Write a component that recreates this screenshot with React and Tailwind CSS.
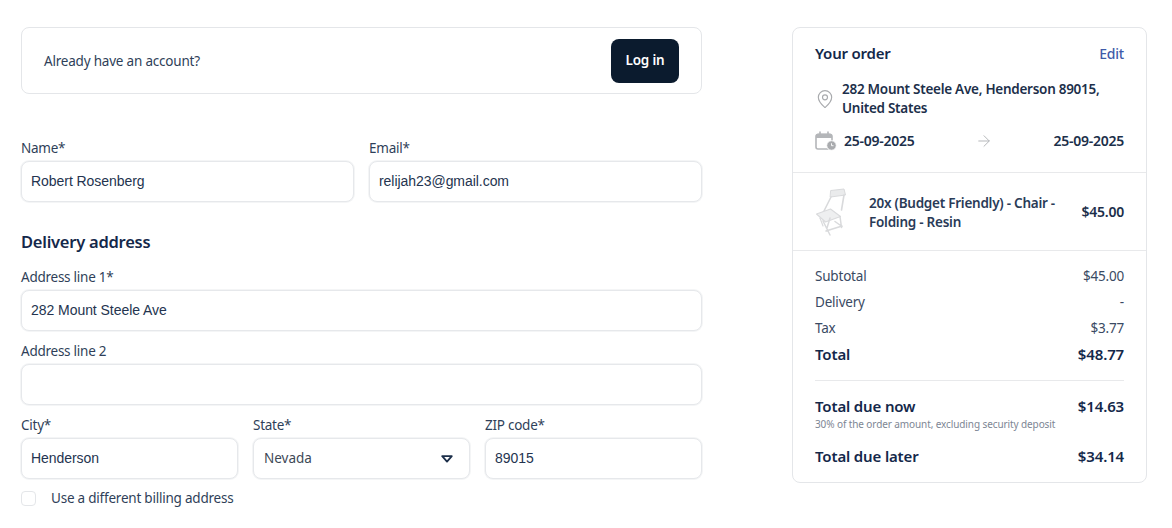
import { ArrowRight, MapPin } from 'lucide-react'

const bodyFont = { fontFamily: '"Noto Sans", sans-serif' }

function Field({ label, value, className = '' }) {
  return (
    <div className={`flex flex-col ${className}`}>
      <label className="text-[13.5px] leading-[19px] h-[20px] mb-[2px] tracking-[-0.25px] text-[#2f3f59]">{label}</label>
      <div className="h-[41px] rounded-lg border border-[#e6e8eb] shadow-[0_0_0_1px_#f4f5f6] bg-white px-[9px] flex items-center font-['Liberation_Sans',sans-serif] text-[14px] tracking-[-0.05px] text-[#24344f]">
        {value}
      </div>
    </div>
  )
}

function SummaryRow({ label, value }) {
  return (
    <div className="flex justify-between items-center h-[26px] text-[13.5px] tracking-[-0.2px] text-[#3a4a63]">
      <span>{label}</span>
      <span>{value}</span>
    </div>
  )
}

function CalendarClock() {
  return (
    <svg width="22" height="20" viewBox="0 0 22 20" fill="none" className="shrink-0">
      <rect x="1" y="3.5" width="16" height="14.5" rx="2" stroke="#b4b6b9" strokeWidth="1.6" />
      <path d="M1 4.5a2 2 0 0 1 2-2h12a2 2 0 0 1 2 2V7H1z" fill="#b4b6b9" />
      <path d="M5 1v3M13 1v3" stroke="#b4b6b9" strokeWidth="1.6" strokeLinecap="round" />
      <circle cx="16.5" cy="14.5" r="4.8" fill="#a9abae" stroke="white" strokeWidth="1" />
      <path d="M16.5 12.3v2.4h2" stroke="white" strokeWidth="0.9" />
    </svg>
  )
}

function Chair() {
  return (
    <svg width="32" height="48" viewBox="0 0 32 48" fill="none" className="shrink-0">
      <g stroke="#d9dadc" strokeLinecap="round" strokeLinejoin="round">
        <path d="M16 2.5l13-1.5 1.5 6-15 2z" fill="#eaebec" strokeWidth="1" />
        <path d="M16 9L7 27M29 7l-1.5 9-1 6" strokeWidth="1.6" />
        <path d="M1.5 26l14-5 10 7.5-15 5.5z" fill="#eeeff0" strokeWidth="1.1" />
        <path d="M8 33l7 14M15 30l-3 10M25 28.5l1.5 11M20 33.5l7 5M11 43l16-5" strokeWidth="1.5" />
        <path d="M5 30l3 8" strokeWidth="1.2" />
      </g>
    </svg>
  )
}

export default function App() {
  return (
    <div style={bodyFont} className="w-[1172px] h-[528px] overflow-hidden bg-white pt-[27px] pl-[21px] flex items-start gap-[90px]">
      <div className="w-[681px] shrink-0">
        <div className="h-[67px] rounded-lg border border-[#e4e6e9] flex items-center justify-between pl-[22px] pr-[22px]">
          <span className="text-[13.5px] tracking-[-0.2px] text-[#2f3f59] translate-y-px">Already have an account?</span>
          <button className="h-[44px] w-[68px] rounded-lg bg-[#0b1b2e] text-white text-[13.5px] font-semibold tracking-[-0.2px]">Log in</button>
        </div>

        <div className="mt-[45px] grid grid-cols-2 gap-[15px]">
          <Field label="Name*" value="Robert Rosenberg" />
          <Field label="Email*" value="relijah23@gmail.com" />
        </div>

        <h2 className="mt-[27px] text-[16.5px] leading-[26px] font-semibold tracking-[-0.25px] text-[#14284a]">Delivery address</h2>

        <Field label="Address line 1*" value="282 Mount Steele Ave" className="mt-[13px]" />
        <Field label="Address line 2" value="" className="mt-[11px]" />

        <div className="mt-[11px] grid grid-cols-3 gap-[15px]">
          <Field label="City*" value="Henderson" />
          <div className="flex flex-col">
            <label className="text-[13.5px] leading-[19px] h-[20px] mb-[2px] tracking-[-0.25px] text-[#2f3f59]">State*</label>
            <div className="h-[41px] rounded-lg border border-[#e6e8eb] shadow-[0_0_0_1px_#f4f5f6] bg-white pl-[10px] pr-[16px] flex items-center justify-between text-[13.5px] text-[#3d4856]">
              <span>Nevada</span>
              <svg width="12" height="8" viewBox="0 0 12 8" fill="none">
                <path d="M1.2 1.2h9.6L6 6.6z" stroke="#1c2f4a" strokeWidth="1.8" strokeLinejoin="round" />
              </svg>
            </div>
          </div>
          <Field label="ZIP code*" value="89015" />
        </div>

        <div className="mt-[9px] flex items-center gap-[15px]">
          <span className="w-[15px] h-[15px] rounded-[4px] border border-[#e4e6e9]" />
          <span className="text-[13.5px] tracking-[-0.22px] text-[#2f3f59]">Use a different billing address</span>
        </div>
      </div>

      <div className="w-[355px] h-[456px] shrink-0 rounded-lg border border-[#e4e6e9]">
        <div className="px-[22px] pt-[14px] h-[145px] border-b border-[#e8e9eb]">
          <div className="flex justify-between items-center h-[24px]">
            <span className="text-[15px] font-semibold tracking-[-0.2px] text-[#14284a] -translate-y-px">Your order</span>
            <span className="text-[14px] font-medium tracking-[-0.2px] text-[#3f5ba9] -translate-y-px">Edit</span>
          </div>
          <div className="mt-[14px] flex items-center gap-[7px]">
            <MapPin size={20} strokeWidth={1.4} color="#a9abae" className="shrink-0" />
            <p className="text-[13.5px] leading-[19px] font-semibold tracking-[-0.27px] text-[#1c2f4a]">282 Mount Steele Ave, Henderson 89015, United States</p>
          </div>
          <div className="mt-[12px] flex items-center justify-between text-[14px] font-semibold tracking-[-0.25px] text-[#1c2f4a]">
            <div className="flex items-center gap-[7px]">
              <CalendarClock />
              <span>25-09-2025</span>
            </div>
            <ArrowRight size={18} strokeWidth={1.3} color="#b4b6b9" />
            <span>25-09-2025</span>
          </div>
        </div>

        <div className="h-[78px] px-[22px] border-b border-[#e8e9eb] flex items-center">
          <Chair />
          <p className="ml-[22px] w-[196px] text-[13.5px] leading-[19px] font-semibold tracking-[-0.25px] text-[#2a3b57] translate-y-px">20x (Budget Friendly) - Chair - Folding - Resin</p>
          <span className="ml-auto text-[14px] font-semibold tracking-[-0.25px] text-[#1c2f4a]">$45.00</span>
        </div>

        <div className="px-[22px] pt-[12px]">
          <SummaryRow label="Subtotal" value="$45.00" />
          <SummaryRow label="Delivery" value="-" />
          <SummaryRow label="Tax" value="$3.77" />
          <div className="flex justify-between items-center h-[26px] text-[15px] font-semibold tracking-[-0.15px] text-[#14284a]">
            <span>Total</span>
            <span>$48.77</span>
          </div>
          <div className="mt-[13px] border-t border-[#e8e9eb] pt-[14px]">
            <div className="flex justify-between items-center h-[22px] text-[15px] font-semibold tracking-[-0.15px] text-[#14284a]">
              <span>Total due now</span>
              <span>$14.63</span>
            </div>
            <p className="mt-[1px] text-[10px] leading-[12px] tracking-[-0.1px] text-[#7d8694]">30% of the order amount, excluding security deposit</p>
            <div className="mt-[14px] flex justify-between items-center h-[24px] text-[15px] font-semibold tracking-[-0.15px] text-[#14284a]">
              <span>Total due later</span>
              <span>$34.14</span>
            </div>
          </div>
        </div>
      </div>
    </div>
  )
}
